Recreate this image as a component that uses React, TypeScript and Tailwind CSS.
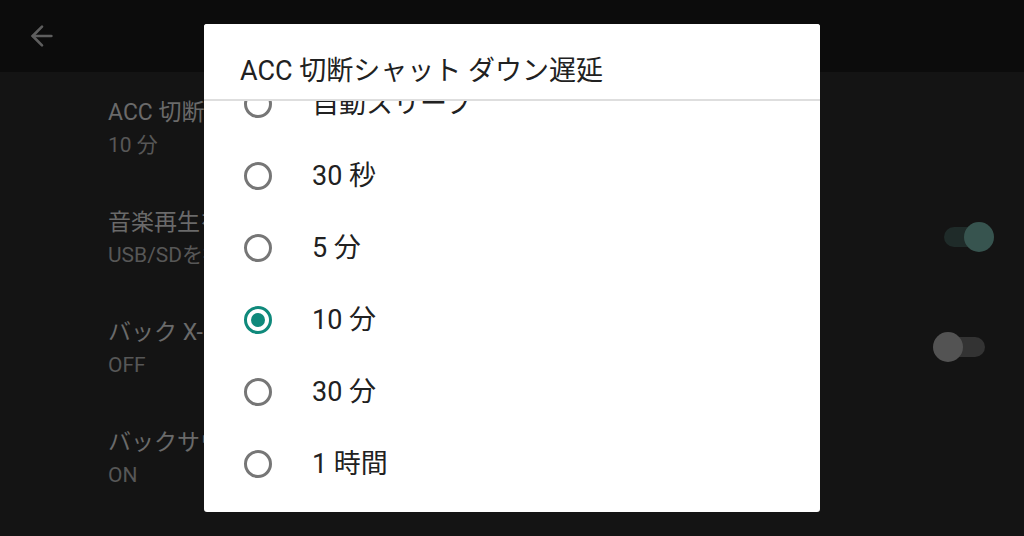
import { ArrowLeft } from "lucide-react"

const font = { fontFamily: '"Roboto", "Noto Sans CJK JP", sans-serif' }

type Row = { title: string; sub: string; toggle?: "on" | "off" }

const rows: Row[] = [
  { title: "ACC 切断シャット ダウン遅延", sub: "10 分" },
  { title: "音楽再生を自動で開始", sub: "USB/SDを接続したとき", toggle: "on" },
  { title: "バック X-ビュー", sub: "OFF", toggle: "off" },
  { title: "バックサウンド", sub: "ON" },
]

const options = ["自動スリープ", "30 秒", "5 分", "10 分", "30 分", "1 時間"]
const selected = "10 分"

function Toggle({ on }: { on: boolean }) {
  return (
    <div className="relative w-[62px] h-[30px]">
      <div className={`absolute left-[11px] top-[5px] w-[41px] h-[20px] rounded-full ${on ? "bg-[#1f2b29]" : "bg-[#333333]"}`} />
      <div className={`absolute top-0 w-[30px] h-[30px] rounded-full ${on ? "left-[31px] bg-[#37544f]" : "left-0 bg-[#535353]"}`} />
    </div>
  )
}

function Radio({ checked }: { checked: boolean }) {
  return checked ? (
    <div className="w-[28px] h-[28px] rounded-full border-[3px] border-[#0f897b] flex items-center justify-center">
      <div className="w-[14px] h-[14px] rounded-full bg-[#0f897b]" />
    </div>
  ) : (
    <div className="w-[28px] h-[28px] rounded-full border-[3px] border-[#767676]" />
  )
}

export default function App() {
  return (
    <div className="relative w-[1024px] h-[536px] overflow-hidden bg-[#141414]" style={font}>
      {/* Toolbar */}
      <div className="h-[72px] bg-[#0c0c0c] flex items-center pl-[26px]">
        <ArrowLeft className="w-[32px] h-[32px] text-[#5e5e5e]" strokeWidth={2} />
      </div>

      {/* Settings list behind the dialog */}
      <div className="flex flex-col">
        {rows.map((row) => (
          <div key={row.title} className="h-[110px] flex items-center pl-[108px] pr-[29px]">
            <div className="flex-1 flex flex-col pt-[2px]">
              <span className="text-[23px] leading-[34px] text-[#6a6a6a]">{row.title}</span>
              <span className="text-[21px] leading-[30px] text-[#575757]">{row.sub}</span>
            </div>
            {row.toggle && <Toggle on={row.toggle === "on"} />}
          </div>
        ))}
      </div>

      {/* Dialog */}
      <div className="absolute left-[204px] top-[24px] w-[616px] h-[488px] bg-white rounded-[3px] flex flex-col overflow-hidden">
        <div className="h-[77px] shrink-0 flex items-end pl-[36px] pb-[11px] border-b-2 border-[#dedede] relative z-10 bg-white">
          <span className="text-[27px] leading-[34px] text-[#212121]">ACC 切断シャット ダウン遅延</span>
        </div>
        <div className="flex-1 overflow-hidden">
          <div className="-mt-[33px] flex flex-col">
            {options.map((opt) => (
              <div key={opt} className="h-[72px] flex items-center pl-[40px]">
                <Radio checked={opt === selected} />
                <span className="ml-[40px] text-[27px] text-[#212121]">{opt}</span>
              </div>
            ))}
          </div>
        </div>
      </div>
    </div>
  )
}
